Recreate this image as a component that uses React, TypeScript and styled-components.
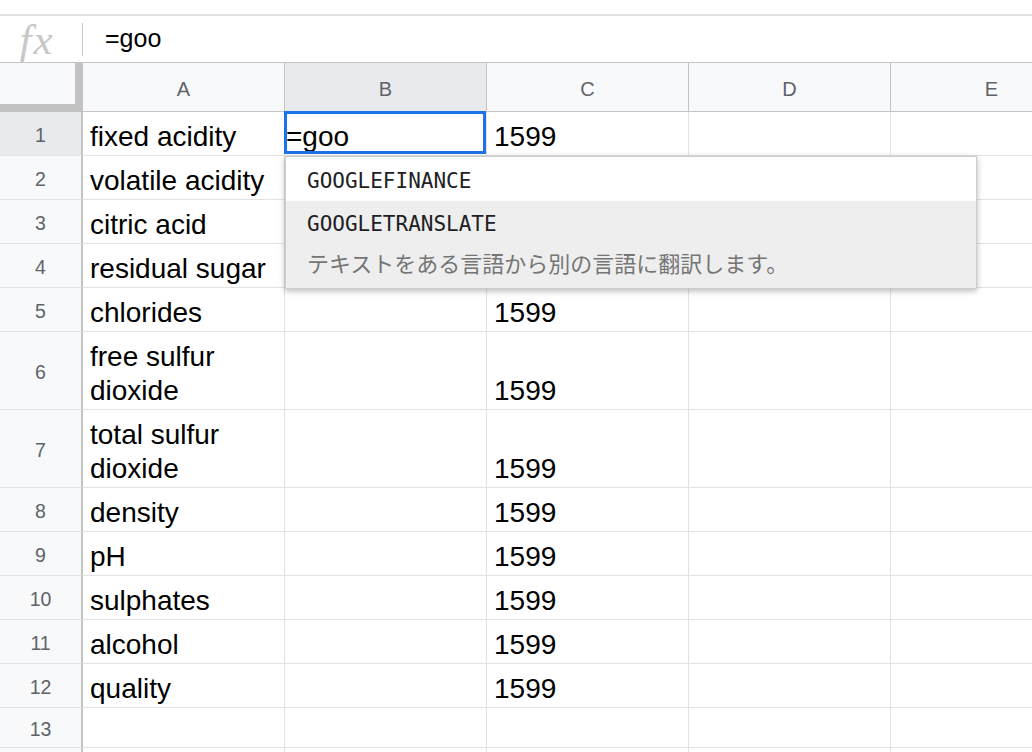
import React from 'react';
import styled, { createGlobalStyle } from 'styled-components';

const GlobalStyle = createGlobalStyle`
  *, *::before, *::after { box-sizing: border-box; }
  html, body { margin: 0; padding: 0; background: #ffffff; }
  body { font-family: "Liberation Sans", Arial, sans-serif; overflow: hidden; }
  #root { width: 1032px; height: 752px; overflow: hidden; }
`;

const Page = styled.div`
  width: 1032px;
  height: 752px;
  overflow: hidden;
  display: flex;
  flex-direction: column;
  background: #ffffff;
`;

const TopStrip = styled.div`
  flex: none;
  height: 16px;
  border-bottom: 2px solid #e1e1e1;
`;

const FormulaBar = styled.div`
  flex: none;
  height: 47px;
  display: flex;
  align-items: center;
  border-bottom: 1px solid #c4c4c4;
`;

const FxBox = styled.div`
  width: 82px;
  height: 100%;
  display: flex;
  align-items: center;
  justify-content: center;
  padding-right: 8px;
  font-family: "Liberation Serif", "Times New Roman", serif;
  font-style: italic;
  font-size: 43px;
  letter-spacing: 2px;
  color: #c8c8c8;
  line-height: 1;
`;

const Separator = styled.div`
  width: 1px;
  height: 33px;
  background: #c8c8c8;
`;

const FormulaText = styled.div`
  padding-left: 22px;
  font-size: 25px;
  color: #000000;
  padding-bottom: 2px;
`;

const Sheet = styled.div`
  flex: none;
  display: grid;
  grid-template-columns: 83px repeat(5, 202px);
  grid-template-rows: 49px repeat(5, 44px) 78px 78px repeat(5, 44px) 40px 40px;
`;

const Corner = styled.div`
  background: #f8f9fa;
  border-right: 8px solid #c2c2c2;
  border-bottom: 8px solid #c2c2c2;
`;

const ColHeader = styled.div<{ $active?: boolean }>`
  background: ${(p) => (p.$active ? '#e8eaed' : '#f8f9fa')};
  border-right: 1px solid #c4c4c4;
  border-bottom: 1px solid #c4c4c4;
  display: flex;
  align-items: center;
  justify-content: center;
  font-size: 20px;
  color: #5f6368;
  padding-top: 5px;
`;

const RowHeader = styled.div<{ $active?: boolean }>`
  background: ${(p) => (p.$active ? '#e8eaed' : '#f8f9fa')};
  border-right: 2px solid #c4c4c4;
  border-bottom: 1px solid #e2e2e3;
  display: flex;
  align-items: center;
  justify-content: center;
  font-size: 19.5px;
  color: #5f6368;
  padding-top: 3px;
`;

const Cell = styled.div<{ $tight?: boolean }>`
  position: relative;
  border-right: 1px solid #e2e2e3;
  border-bottom: 1px solid #e2e2e3;
  display: flex;
  flex-direction: column;
  justify-content: flex-end;
  padding: 0 6px 1px ${(p) => (p.$tight ? '1px' : '7px')};
  font-size: 28px;
  line-height: 34px;
  color: #000000;
  background: #ffffff;
`;

const Selection = styled.div`
  position: absolute;
  top: -1px;
  left: -1px;
  right: 0;
  bottom: 1px;
  border: 3px solid #1a73e8;
  pointer-events: none;
`;

const Suggest = styled.div`
  position: absolute;
  top: calc(100% + 1px);
  left: 0;
  width: 692px;
  background: #ffffff;
  border: 1px solid #cdcdcd;
  box-shadow: 0 2px 6px rgba(0, 0, 0, 0.28);
  z-index: 10;
  display: flex;
  flex-direction: column;
`;

const SuggestItem = styled.div<{ $highlight?: boolean }>`
  height: ${(p) => (p.$highlight ? '87px' : '44px')};
  background: ${(p) => (p.$highlight ? '#eeeeee' : '#ffffff')};
  padding: ${(p) => (p.$highlight ? '10px 21px 0' : '3px 21px 0')};
  display: flex;
  flex-direction: column;
  justify-content: ${(p) => (p.$highlight ? 'flex-start' : 'center')};
`;

const FnName = styled.div`
  font-family: "DejaVu Sans Mono", "Liberation Mono", monospace;
  font-size: 21px;
  line-height: 26px;
  color: #202124;
`;

const FnDesc = styled.div`
  margin-top: 10px;
  font-family: "Noto Sans CJK JP", "Noto Sans", sans-serif;
  font-size: 22px;
  line-height: 30px;
  color: #757575;
  white-space: nowrap;
`;

const rows = [
  { n: '1', a: 'fixed acidity', c: '1599' },
  { n: '2', a: 'volatile acidity', c: '' },
  { n: '3', a: 'citric acid', c: '' },
  { n: '4', a: 'residual sugar', c: '' },
  { n: '5', a: 'chlorides', c: '1599' },
  { n: '6', a: 'free sulfur dioxide', c: '1599' },
  { n: '7', a: 'total sulfur dioxide', c: '1599' },
  { n: '8', a: 'density', c: '1599' },
  { n: '9', a: 'pH', c: '1599' },
  { n: '10', a: 'sulphates', c: '1599' },
  { n: '11', a: 'alcohol', c: '1599' },
  { n: '12', a: 'quality', c: '1599' },
  { n: '13', a: '', c: '' },
  { n: '', a: '', c: '' },
];

const columns = ['A', 'B', 'C', 'D', 'E'];

export default function App() {
  return (
    <Page>
      <GlobalStyle />
      <TopStrip />
      <FormulaBar>
        <FxBox>fx</FxBox>
        <Separator />
        <FormulaText>=goo</FormulaText>
      </FormulaBar>
      <Sheet>
        <Corner />
        {columns.map((col) => (
          <ColHeader key={col} $active={col === 'B'}>
            {col}
          </ColHeader>
        ))}
        {rows.map((r, i) => (
          <React.Fragment key={i}>
            <RowHeader $active={i === 0}>{r.n}</RowHeader>
            <Cell>{r.a}</Cell>
            {i === 0 ? (
              <Cell $tight>
                =goo
                <Selection />
                <Suggest>
                  <SuggestItem>
                    <FnName>GOOGLEFINANCE</FnName>
                  </SuggestItem>
                  <SuggestItem $highlight>
                    <FnName>GOOGLETRANSLATE</FnName>
                    <FnDesc>テキストをある言語から別の言語に翻訳します。</FnDesc>
                  </SuggestItem>
                </Suggest>
              </Cell>
            ) : (
              <Cell />
            )}
            <Cell>{r.c}</Cell>
            <Cell />
            <Cell />
          </React.Fragment>
        ))}
      </Sheet>
    </Page>
  );
}
